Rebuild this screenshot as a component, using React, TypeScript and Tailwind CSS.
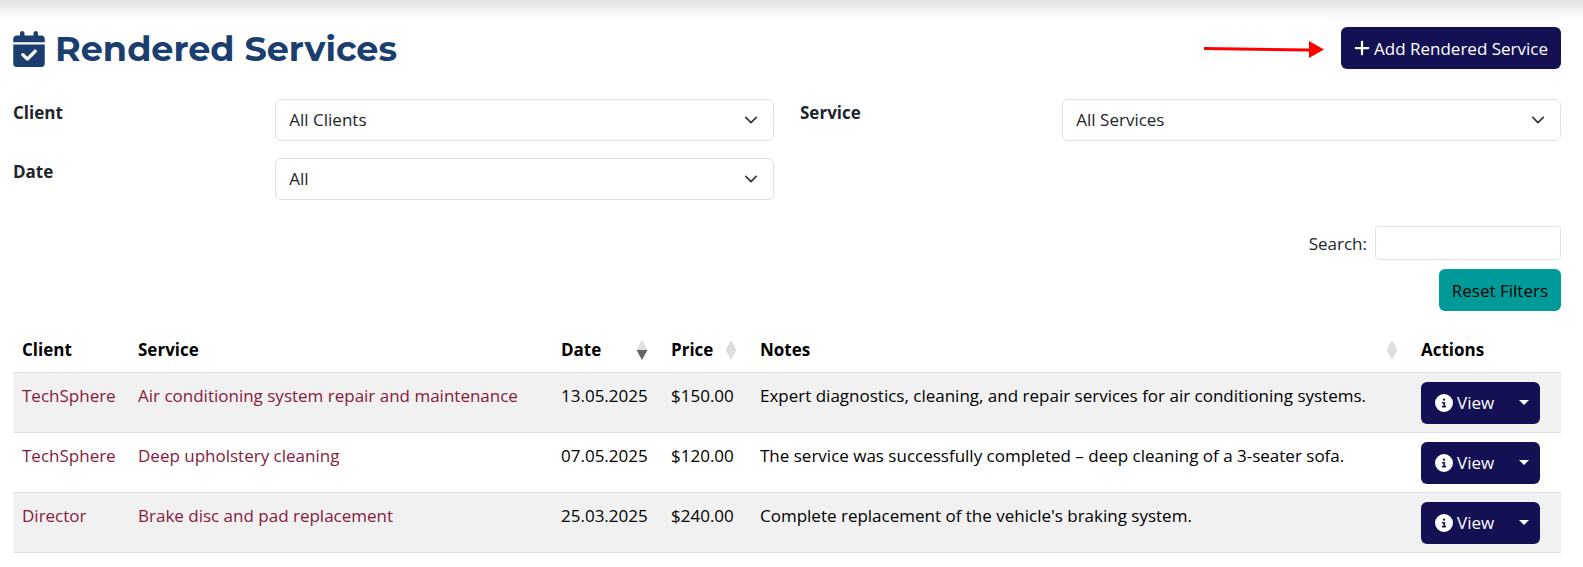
import { FaCalendarCheck, FaCircleInfo, FaPlus } from "react-icons/fa6";

type Service = {
  client: string;
  service: string;
  date: string;
  price: string;
  notes: string;
};

const services: Service[] = [
  {
    client: "TechSphere",
    service: "Air conditioning system repair and maintenance",
    date: "13.05.2025",
    price: "$150.00",
    notes: "Expert diagnostics, cleaning, and repair services for air conditioning systems.",
  },
  {
    client: "TechSphere",
    service: "Deep upholstery cleaning",
    date: "07.05.2025",
    price: "$120.00",
    notes: "The service was successfully completed – deep cleaning of a 3-seater sofa.",
  },
  {
    client: "Director",
    service: "Brake disc and pad replacement",
    date: "25.03.2025",
    price: "$240.00",
    notes: "Complete replacement of the vehicle's braking system.",
  },
];

function Filter({ id, label, option }: { id: string; label: string; option: string }) {
  return (
    <>
      <label htmlFor={id} className="px-[13px] font-bold leading-[27px]">
        {label}
      </label>
      <div className="relative col-span-2 px-[13px]">
        <select
          id={id}
          className="h-[42px] w-full appearance-none rounded-md border border-[#dee2e6] bg-white px-[13px] pb-0.5 text-[#212529]"
        >
          <option>{option}</option>
        </select>
        <svg
          viewBox="0 0 16 16"
          className="pointer-events-none absolute right-[29px] top-[14px] size-[14px] fill-none stroke-[#343a40] stroke-2"
          strokeLinecap="round"
          strokeLinejoin="round"
        >
          <path d="m2 5 6 6 6-6" />
        </svg>
      </div>
    </>
  );
}

function SortIcon({ descending = false }: { descending?: boolean }) {
  return (
    <svg viewBox="0 0 12 20" className="h-5 w-3">
      <path d="M6 0 11.5 10H.5z" fill="#dedede" />
      <path d="M6 20 .5 10h11z" fill={descending ? "#666666" : "#dedede"} />
    </svg>
  );
}

function SortableHeader({ label, descending }: { label: string; descending?: boolean }) {
  return (
    <th className="px-[9px] text-left font-bold">
      <button type="button" className="flex w-full items-center justify-between pr-[5px] font-bold">
        {label}
        <SortIcon descending={descending} />
      </button>
    </th>
  );
}

export default function App() {
  return (
    <div className="bg-white font-['Open_Sans','Noto_Sans',sans-serif] text-[17px] leading-[27px] text-[#212529]">
      <div className="h-[27px] bg-linear-to-b from-[#e0e0e0] via-[#f8f8f8] via-50% to-white to-85%" />
      <main className="mr-[9px]">
        <header className="flex items-start justify-between px-[13px]">
          <h1 className="flex items-center gap-[10px] font-['Montserrat','Inter',sans-serif] text-[35px] font-bold leading-[44px] text-[#1a3f6f]">
            <FaCalendarCheck className="h-9 w-8" />
            Rendered Services
          </h1>
          <div className="flex items-center gap-[17px]">
            <svg viewBox="0 -2 120 20" className="h-5 w-[120px]" fill="#ff0000">
              <path d="M0 7v3l105 1.500V8.500z" />
              <path d="M105 1v17l15-8.500z" />
            </svg>
            <button
              type="button"
              className="flex h-[42px] items-center gap-1 rounded-md bg-[#131153] px-[13px] text-white"
            >
              <FaPlus className="h-[18px] w-4" />
              Add Rendered Service
            </button>
          </div>
        </header>

        <section className="mt-7 grid grid-cols-6 gap-y-[17px]">
          <Filter id="client" label="Client" option="All Clients" />
          <Filter id="service" label="Service" option="All Services" />
          <Filter id="date" label="Date" option="All" />
        </section>

        <section className="mt-[26px] flex flex-col items-end gap-[9px] px-[13px]">
          <div className="flex items-center gap-2">
            <label htmlFor="search">Search:</label>
            <input
              id="search"
              type="search"
              className="h-[34px] w-[186px] rounded border border-[#dee2e6] bg-white px-2"
            />
          </div>
          <button type="button" className="h-[42px] rounded-md bg-[#009b99] px-[13px] text-black">
            Reset Filters
          </button>
        </section>

        <div className="mt-[17px] px-[13px]">
          <table className="w-full table-fixed border-collapse text-black">
            <colgroup>
              <col className="w-[116px]" />
              <col className="w-[423px]" />
              <col className="w-[110px]" />
              <col className="w-[89px]" />
              <col />
              <col className="w-[149px]" />
            </colgroup>
            <thead>
              <tr className="h-11 border-b border-[#dee2e6]">
                <th className="px-[9px] text-left font-bold">Client</th>
                <th className="px-[9px] text-left font-bold">Service</th>
                <SortableHeader label="Date" descending />
                <SortableHeader label="Price" />
                <SortableHeader label="Notes" />
                <th className="px-[9px] text-left font-bold">Actions</th>
              </tr>
            </thead>
            <tbody>
              {services.map((row) => (
                <tr key={row.date} className="border-b border-[#dee2e6] align-top odd:bg-[#f1f1f1]">
                  <td className="px-[9px] pt-[9px]">
                    <a href="#client" className="text-[#861a3c]">
                      {row.client}
                    </a>
                  </td>
                  <td className="px-[9px] pt-[9px]">
                    <a href="#service" className="text-[#861a3c]">
                      {row.service}
                    </a>
                  </td>
                  <td className="px-[9px] pt-[9px]">{row.date}</td>
                  <td className="px-[9px] pt-[9px]">{row.price}</td>
                  <td className="px-[9px] pt-[9px]">{row.notes}</td>
                  <td className="px-[9px] pb-2 pt-[9px]">
                    <div className="flex h-[42px] w-[119px] overflow-hidden rounded-md bg-[#131153] text-white">
                      <button type="button" className="flex flex-1 items-center gap-1 pl-[14px]">
                        <FaCircleInfo className="size-[18px]" />
                        View
                      </button>
                      <button
                        type="button"
                        aria-label="More actions"
                        className="flex w-8 items-center justify-center"
                      >
                        <svg viewBox="0 0 10 5" className="h-[5px] w-[10px] fill-white">
                          <path d="M0 0h10L5 5z" />
                        </svg>
                      </button>
                    </div>
                  </td>
                </tr>
              ))}
            </tbody>
          </table>
        </div>
      </main>
    </div>
  );
}
